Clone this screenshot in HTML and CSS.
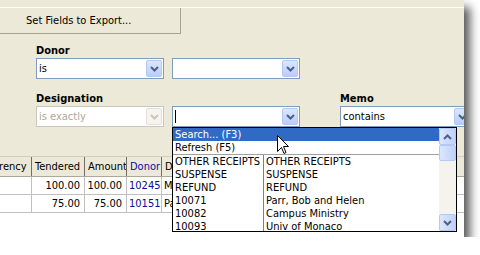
FILE: index.html
```html
<!DOCTYPE html>
<html>
<head>
<meta charset="utf-8">
<link rel="stylesheet" href="styles.css">
</head>
<body>
<div class="window">
  <div class="topstrip"></div>
  <div class="toolbar"><div class="tbbtn">Set Fields to Export...</div></div>

  <div class="filters">
    <div class="label r1">Donor</div>
    <div class="combo r2 c1"><span class="val">is</span><span class="ddbtn"><svg width="9" height="6" viewBox="0 0 9 6"><polyline points="1,1 4.5,4.5 8,1" fill="none" stroke="#4D6185" stroke-width="2"/></svg></span></div>
    <div class="combo r2 c2"><span class="val"></span><span class="ddbtn"><svg width="9" height="6" viewBox="0 0 9 6"><polyline points="1,1 4.5,4.5 8,1" fill="none" stroke="#4D6185" stroke-width="2"/></svg></span></div>

    <div class="label r4 c1">Designation</div>
    <div class="label r4 c3 memo">Memo</div>
    <div class="combo disabled r5 c1"><span class="val">is exactly</span><span class="ddbtn"><svg width="9" height="6" viewBox="0 0 9 6"><polyline points="1,1 4.5,4.5 8,1" fill="none" stroke="#C9C7BA" stroke-width="2"/></svg></span></div>
    <div class="combo r5 c2"><span class="val"><span class="caret"></span></span><span class="ddbtn"><svg width="9" height="6" viewBox="0 0 9 6"><polyline points="1,1 4.5,4.5 8,1" fill="none" stroke="#4D6185" stroke-width="2"/></svg></span></div>
    <div class="combo r5 c3 memo wide"><span class="val">contains</span><span class="ddbtn"><svg width="9" height="6" viewBox="0 0 9 6"><polyline points="1,1 4.5,4.5 8,1" fill="none" stroke="#4D6185" stroke-width="2"/></svg></span></div>
  </div>

  <div class="grid">
    <div class="hrow">
      <div class="cell w0">Currency</div>
      <div class="cell w1">Tendered</div>
      <div class="cell w2">Amount</div>
      <div class="cell w3 blue">Donor</div>
      <div class="cell w4">Donor Name</div>
    </div>
    <div class="drow">
      <div class="cell w0"></div>
      <div class="cell w1 num">100.00</div>
      <div class="cell w2 num">100.00</div>
      <div class="cell w3 blue">10245</div>
      <div class="cell w4">Miller</div>
    </div>
    <div class="drow">
      <div class="cell w0"></div>
      <div class="cell w1 num">75.00</div>
      <div class="cell w2 num">75.00</div>
      <div class="cell w3 blue">10151</div>
      <div class="cell w4">Parr</div>
    </div>
  </div>

  <div class="dlist">
    <div class="items">
      <div class="item full sel">Search... (F3)</div>
      <div class="item full">Refresh (F5)</div>
      <div class="sep"></div>
      <div class="item two"><span class="k">OTHER RECEIPTS</span><span class="v">OTHER RECEIPTS</span></div>
      <div class="item two"><span class="k">SUSPENSE</span><span class="v">SUSPENSE</span></div>
      <div class="item two"><span class="k">REFUND</span><span class="v">REFUND</span></div>
      <div class="item two"><span class="k">10071</span><span class="v">Parr, Bob and Helen</span></div>
      <div class="item two"><span class="k">10082</span><span class="v">Campus Ministry</span></div>
      <div class="item two"><span class="k">10093</span><span class="v">Univ of Monaco</span></div>
    </div>
    <div class="sbar">
      <div class="sbtn"><svg width="9" height="6" viewBox="0 0 9 6"><polyline points="1,5 4.5,1.5 8,5" fill="none" stroke="#4D6185" stroke-width="2"/></svg></div>
      <div class="thumb"></div>
      <div class="track"></div>
      <div class="sbtn"><svg width="9" height="6" viewBox="0 0 9 6"><polyline points="1,1 4.5,4.5 8,1" fill="none" stroke="#4D6185" stroke-width="2"/></svg></div>
    </div>
  </div>

  <svg class="pointer" width="13" height="20" viewBox="0 0 13 20"><path d="M0.5,0.5 V16.5 L4.5,12.5 L7,18.5 L9,17.5 L6.5,11.5 H11.5 Z" fill="#fff" stroke="#000" stroke-width="1"/></svg>
</div>
</body>
</html>
```

FILE: styles.css
```css
* { box-sizing: border-box; }
body {
  margin: 0;
  background: #fff;
  font-family: "DejaVu Sans Condensed", "DejaVu Sans", sans-serif;
  font-stretch: condensed;
  font-size: 11px;
  color: #000;
}
.window {
  position: relative;
  width: 464px;
  height: 237px;
  background: #ECE9D8;
  overflow: hidden;
  box-shadow: 6px 7px 9px rgba(0, 0, 0, 0.65);
  display: flex;
  flex-direction: column;
}
.topstrip { height: 8px; border-bottom: 1px solid #fff; flex: none; }
.toolbar { height: 26px; display: flex; flex: none; }
.tbbtn {
  width: 181px;
  border-right: 1px solid #A5A291;
  border-bottom: 1px solid #A5A291;
  padding-left: 26px;
  line-height: 25px;
}
.filters {
  display: grid;
  grid-template-columns: 128px 128px 160px;
  grid-template-rows: 14px 21px 13px 14px 21px;
  column-gap: 8px;
  margin-top: 10px;
  padding-left: 36px;
  flex: none;
}
.r1 { grid-row: 1; } .r2 { grid-row: 2; } .r4 { grid-row: 4; } .r5 { grid-row: 5; }
.c1 { grid-column: 1; } .c2 { grid-column: 2; } .c3 { grid-column: 3; }
.memo { margin-left: 32px; }
.label { font-weight: bold; line-height: 14px; }
.combo {
  display: flex;
  align-items: center;
  border: 1px solid #7F9DB9;
  background: #fff;
  height: 21px;
  padding-right: 1px;
}
.combo.wide { width: 132px; }
.combo .val { flex: 1; padding-left: 2px; line-height: 19px; position: relative; height: 19px; }
.combo.disabled { border-color: #C9C7BA; }
.combo.disabled .val { color: #ACA899; }
.caret { position: absolute; left: 2px; top: 3px; width: 1px; height: 13px; background: #000; }
.ddbtn {
  width: 16px;
  height: 17px;
  border: 1px solid #B4C8F6;
  border-radius: 2px;
  background: linear-gradient(#DCE7FE, #B9CDF9);
  display: flex;
  align-items: center;
  justify-content: center;
}
.disabled .ddbtn { background: #F5F4EF; border-color: #E3E1D6; }

.grid {
  margin-top: 29px;
  background: #fff;
  flex: 1;
  margin-left: -21px;
}
.hrow {
  display: flex;
  height: 21px;
  background: #ECE9D8;
  border-top: 1px solid #D0CEBF;
  border-bottom: 1px solid #ACA899;
}
.hrow .cell { border-right: 1px solid #716F64; line-height: 19px; padding-left: 3px; }
.drow { display: flex; height: 18px; border-bottom: 1px solid #C0C0C0; }
.drow .cell { border-right: 1px solid #C0C0C0; line-height: 17px; padding-left: 2px; }
.cell { white-space: nowrap; overflow: hidden; flex: none; }
.w0 { width: 53px; }
.w1 { width: 53px; }
.w2 { width: 42px; }
.w3 { width: 35px; }
.w4 { width: 120px; }
.num { text-align: right; padding-right: 4px; padding-left: 0 !important; }
.blue { color: #0B0B9C; }

.dlist {
  position: absolute;
  left: 172px;
  top: 127px;
  width: 285px;
  height: 105px;
  border: 1px solid #000;
  background: #fff;
  display: flex;
}
.items { flex: 1; overflow: hidden; }
.item { height: 13px; line-height: 13px; white-space: nowrap; }
.item.full { padding-left: 2px; }
.item.sel { background: #316AC5; color: #fff; }
.sep { height: 1px; background: #A0A0A0; }
.item.two { display: flex; }
.item .k { width: 91px; padding-left: 2px; border-right: 1px solid #808080; overflow: hidden; }
.item .v { padding-left: 2px; }
.sbar {
  width: 17px;
  display: flex;
  flex-direction: column;
  background: #F4F3EE;
}
.sbtn, .thumb {
  height: 17px;
  border: 1px solid #B4C8F6;
  border-radius: 2px;
  background: linear-gradient(90deg, #DCE7FE, #BFD1FA);
  display: flex;
  align-items: center;
  justify-content: center;
}
.thumb { height: 16px; }
.track { flex: 1; }
.pointer { position: absolute; left: 277px; top: 135px; }
```
